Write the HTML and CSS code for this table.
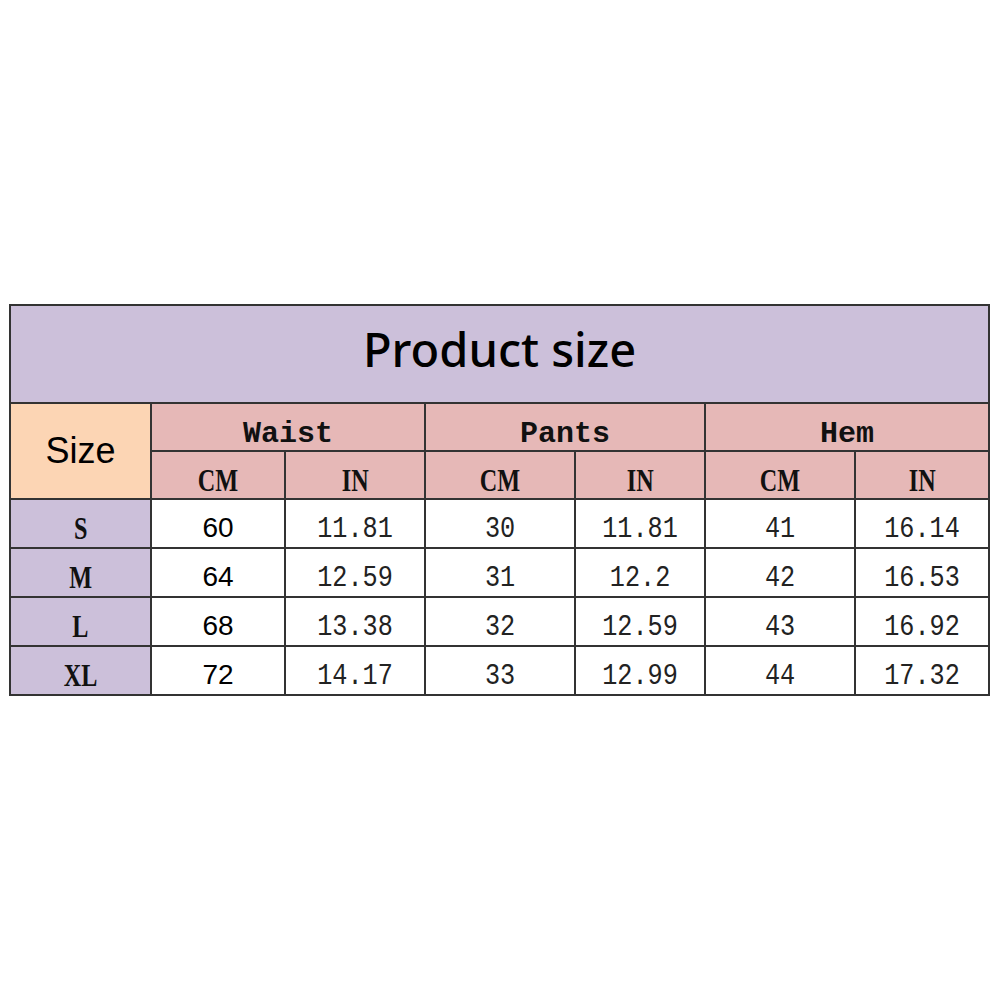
FILE: index.html
```html
<!DOCTYPE html>
<html lang="en">
<head>
<meta charset="UTF-8">
<title>Product size</title>
<link rel="stylesheet" href="styles.css">
</head>
<body>
  <div class="sheet">
    <table class="size-table">
      <colgroup>
        <col class="c-size">
        <col class="c-1"><col class="c-2">
        <col class="c-3"><col class="c-4">
        <col class="c-5"><col class="c-6">
      </colgroup>
      <tr class="title-row">
        <td colspan="7" class="title">Product size</td>
      </tr>
      <tr class="head-row">
        <td rowspan="2" class="size-head">Size</td>
        <td colspan="2" class="group">Waist</td>
        <td colspan="2" class="group">Pants</td>
        <td colspan="2" class="group">Hem</td>
      </tr>
      <tr class="head-row">
        <td class="unit"><span class="narrow">CM</span></td><td class="unit"><span class="narrow">IN</span></td>
        <td class="unit"><span class="narrow">CM</span></td><td class="unit"><span class="narrow">IN</span></td>
        <td class="unit"><span class="narrow">CM</span></td><td class="unit"><span class="narrow">IN</span></td>
      </tr>
      <tr class="data-row">
        <td class="label"><span class="narrow">S</span></td>
        <td class="sans">60</td><td class="num"><span class="slim">11.81</span></td>
        <td class="num"><span class="slim">30</span></td><td class="num"><span class="slim">11.81</span></td>
        <td class="num"><span class="slim">41</span></td><td class="num"><span class="slim">16.14</span></td>
      </tr>
      <tr class="data-row">
        <td class="label"><span class="narrow">M</span></td>
        <td class="sans">64</td><td class="num"><span class="slim">12.59</span></td>
        <td class="num"><span class="slim">31</span></td><td class="num"><span class="slim">12.2</span></td>
        <td class="num"><span class="slim">42</span></td><td class="num"><span class="slim">16.53</span></td>
      </tr>
      <tr class="data-row">
        <td class="label"><span class="narrow">L</span></td>
        <td class="sans">68</td><td class="num"><span class="slim">13.38</span></td>
        <td class="num"><span class="slim">32</span></td><td class="num"><span class="slim">12.59</span></td>
        <td class="num"><span class="slim">43</span></td><td class="num"><span class="slim">16.92</span></td>
      </tr>
      <tr class="data-row">
        <td class="label"><span class="narrow">XL</span></td>
        <td class="sans">72</td><td class="num"><span class="slim">14.17</span></td>
        <td class="num"><span class="slim">33</span></td><td class="num"><span class="slim">12.99</span></td>
        <td class="num"><span class="slim">44</span></td><td class="num"><span class="slim">17.32</span></td>
      </tr>
    </table>
  </div>
</body>
</html>
```
FILE: styles.css
```css
html, body {
  margin: 0;
  padding: 0;
  background: #fff;
  font-family: 'Liberation Sans', Arial, sans-serif;
  color: #111;
}
.sheet {
  padding: 304px 0 0 9px;
}
.size-table {
  border-collapse: collapse;
  table-layout: fixed;
  width: 979px;
}
.c-size { width: 141px; }
.c-1 { width: 134px; }
.c-2 { width: 140px; }
.c-3 { width: 150px; }
.c-4 { width: 130px; }
.c-5 { width: 150px; }
.c-6 { width: 134px; }
.size-table td {
  border: 2px solid #333;
  text-align: center;
  vertical-align: middle;
  padding: 0;
  line-height: 1;
}
.title-row { height: 98px; }
.head-row { height: 48px; }
.data-row { height: 49px; }
.size-table .title {
  background: #ccc0da;
  font-family: 'Noto Sans', 'Open Sans', sans-serif;
  font-size: 47px;
  font-weight: 500;
  color: #000;
  padding-bottom: 10px;
}
.size-table .size-head {
  background: #fcd5b4;
  font-family: 'Liberation Sans', Arial, sans-serif;
  font-size: 36px;
  color: #000;
}
.size-table .group {
  background: #e6b8b7;
  font-family: 'Liberation Mono', 'Courier New', monospace;
  font-size: 30px;
  font-weight: bold;
  color: #111;
  padding-top: 14px;
}
.size-table .unit {
  background: #e6b8b7;
  font-family: 'Liberation Serif', serif;
  font-weight: bold;
  font-size: 31px;
  color: #111;
  padding-top: 10px;
}
.size-table .label {
  background: #ccc0da;
  font-family: 'Liberation Serif', serif;
  font-weight: bold;
  font-size: 31px;
  color: #111;
  padding-top: 10px;
}
.narrow {
  display: inline-block;
  transform: scaleX(0.78);
}
.size-table .sans {
  font-family: 'Liberation Sans', Arial, sans-serif;
  font-size: 28px;
  color: #000;
  padding-top: 8px;
}
.size-table .num {
  font-family: 'Liberation Mono', 'Courier New', monospace;
  font-size: 30px;
  color: #222;
  padding-top: 10px;
}
.slim {
  display: inline-block;
  transform: scaleX(0.84);
}
```
